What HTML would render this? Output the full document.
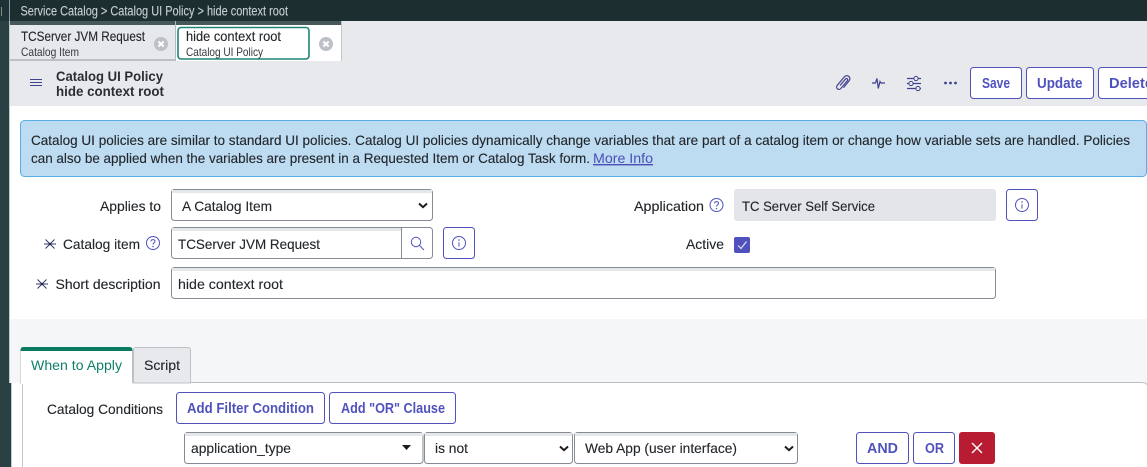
<!DOCTYPE html>
<html lang="en">
<head>
<meta charset="utf-8">
<title>hide context root</title>
<style>
html,body{margin:0;padding:0;width:1147px;height:467px;overflow:hidden;background:#fff}
svg{display:block}
text{font-family:"Liberation Sans",Arial,sans-serif;font-size:14px;fill:#22262a;stroke:#22262a;stroke-width:.12}
.b{font-weight:bold}
.p{fill:#4f52bd;stroke:none;font-weight:bold;font-size:14.5px}
.s{font-size:12px;fill:#33383d;stroke:none}
.btn{fill:#fff;stroke:#4f52bd;stroke-width:1}
.f{fill:#fff;stroke:#858b92;stroke-width:1}
.ic{fill:none;stroke:#3f4290;stroke-width:1.2}
.pi{fill:none;stroke:#4f52bd;stroke-width:1}
</style>
</head>
<body>
<svg xmlns="http://www.w3.org/2000/svg" width="1147" height="467" viewBox="0 0 1147 467">
<defs>
<g id="inf"><circle r="6.5" class="pi"/><path d="M0-.8V3.6" class="pi" stroke-width="1.2"/><circle cy="-3" r=".8" fill="#4f52bd"/></g>
<g id="hlp"><circle r="6.5" class="pi"/><path d="M-2-1.6C-2-4 2-4 2-1.6C2-.1 0-.3 0 1.5" class="pi"/><circle cy="3.6" r=".7" fill="#4f52bd"/></g>
<g id="cls"><circle r="7" fill="#bcc0c7"/><path d="M-2.7-2.5L2.7 2.5M2.7-2.5L-2.7 2.5" stroke="#fff" stroke-width="1.9" fill="none"/></g>
<g id="ast"><path d="M-6 0H6M-4.500 -4.500L4.500 4.500M4.500 -4.500L-4.500 4.500" stroke="#34386f" stroke-width="1" fill="none"/><circle r="1.200" fill="#23253f"/></g>
<path id="chv" d="M-4-1.5L0 2.2L4-1.5" fill="none" stroke="#1b1b1b" stroke-width="2"/>
</defs>

<!-- chrome -->
<rect width="1147" height="467" fill="#fff"/>
<rect x="0" y="0" width="1147" height="21" fill="#1d2e31"/>
<rect x="0" y="0" width="9" height="467" fill="#2a4144"/>
<rect x="0" y="0" width="9" height="21" fill="#1f3235"/>
<rect x="1" y="7" width="1" height="9" fill="#7f8f7c"/>
<rect x="9" y="0" width="1" height="21" fill="#8c9a9c"/>
<rect x="9" y="21" width="1" height="362" fill="#c3c8cc"/>
<text x="20.500" y="15.500" style="font-size:13.500px;fill:#c7d0d2;stroke:#c7d0d2" textLength="267.500" lengthAdjust="spacingAndGlyphs">Service Catalog &gt; Catalog UI Policy &gt; hide context root</text>

<!-- tabs -->
<rect x="342" y="21" width="805" height="40" fill="#e8e9ed"/>
<rect x="10" y="21" width="165" height="39" fill="#e7e8eb"/>
<rect x="10" y="21" width="332" height="4" fill="#47585b"/>
<rect x="10" y="59" width="165" height="2" fill="#bcc0c4"/>
<rect x="175" y="21" width="1" height="40" fill="#b5babf"/>
<text x="21" y="41" style="font-size:14px" textLength="124" lengthAdjust="spacingAndGlyphs">TCServer JVM Request</text>
<text x="21" y="56" class="s" textLength="58" lengthAdjust="spacingAndGlyphs">Catalog Item</text>
<use href="#cls" x="161" y="44"/>
<rect x="176" y="25" width="165" height="36" fill="#fff"/>
<rect x="341" y="21" width="1" height="40" fill="#c3c6cb"/>
<rect x="178" y="27.500" width="131" height="31.500" rx="3" fill="#fff" stroke="#1f8476" stroke-width="1.600"/>
<text x="186" y="41" style="font-size:14px" textLength="95" lengthAdjust="spacingAndGlyphs">hide context root</text>
<text x="186" y="56" class="s" textLength="77" lengthAdjust="spacingAndGlyphs">Catalog UI Policy</text>
<use href="#cls" x="326" y="44"/>

<!-- header -->
<rect x="10" y="61" width="1137" height="45" fill="#e8e9ed"/>
<path d="M30 79.500H42M30 82.500H42M30 85.500H42" stroke="#3f4290" stroke-width="1.100" fill="none"/>
<text x="56" y="81" class="b" style="font-size:13.500px;fill:#2a2e33;stroke:none" textLength="107" lengthAdjust="spacingAndGlyphs">Catalog UI Policy</text>
<text x="56" y="96" class="b" style="font-size:13.500px;fill:#2a2e33;stroke:none" textLength="108" lengthAdjust="spacingAndGlyphs">hide context root</text>
<path class="ic" d="M840 85.500L845.300 79.200C846.600 77.700 848.500 79.300 847.300 80.800L840.800 88.500C838.800 90.900 835.200 88.200 837.200 85.400L844.200 77C847 73.800 851.700 77.300 849.200 80.600L843.500 87.800" />
<path class="ic" d="M872 83H875.500L877 78.500L878.300 88.500L880 81.500L881 83H885" stroke-width="1.500"/>
<path class="ic" d="M907 78.500H921M907 83.500H921M907 88.500H921"/>
<circle cx="916" cy="78.500" r="2.100" fill="#e8e9ed" stroke="#3f4290"/><circle cx="911" cy="83.500" r="2.100" fill="#e8e9ed" stroke="#3f4290"/><circle cx="918" cy="88.500" r="2.100" fill="#e8e9ed" stroke="#3f4290"/>
<circle cx="945.500" cy="83" r="1.400" fill="#3f4290"/><circle cx="950.500" cy="83" r="1.400" fill="#3f4290"/><circle cx="955.500" cy="83" r="1.400" fill="#3f4290"/>
<rect x="970.500" y="67.500" width="51" height="31" rx="3" class="btn"/>
<rect x="1026.500" y="67.500" width="67" height="31" rx="3" class="btn"/>
<rect x="1098.500" y="67.500" width="70" height="31" rx="3" class="btn"/>
<text x="982" y="88" class="p" textLength="28" lengthAdjust="spacingAndGlyphs">Save</text>
<text x="1037" y="88" class="p" textLength="45.500" lengthAdjust="spacingAndGlyphs">Update</text>
<text x="1109" y="88" class="p" textLength="44" lengthAdjust="spacingAndGlyphs">Delete</text>

<!-- alert -->
<rect x="20.500" y="120.500" width="1126" height="56" rx="4" fill="#bddbf1" stroke="#5aaee6"/>
<text x="31" y="145" textLength="1099" lengthAdjust="spacingAndGlyphs">Catalog UI policies are similar to standard UI policies. Catalog UI policies dynamically change variables that are part of a catalog item or change how variable sets are handled. Policies</text>
<text x="31" y="163" textLength="559" lengthAdjust="spacingAndGlyphs">can also be applied when the variables are present in a Requested Item or Catalog Task form.</text>
<text x="593" y="163" style="fill:#4a4eb5;stroke:none;text-decoration:underline" textLength="60" lengthAdjust="spacingAndGlyphs">More Info</text>

<!-- form left -->
<text x="100" y="211" textLength="61" lengthAdjust="spacingAndGlyphs">Applies to</text>
<rect x="171.500" y="189.500" width="261" height="31" rx="3" class="f"/>
<rect x="172" y="190" width="260" height="3" fill="#e6e7ea"/>
<text x="182" y="211" textLength="90" lengthAdjust="spacingAndGlyphs">A Catalog Item</text>
<use href="#chv" x="423" y="205"/>

<use href="#ast" x="50" y="244"/>
<text x="63" y="249" textLength="77" lengthAdjust="spacingAndGlyphs">Catalog item</text>
<use href="#hlp" x="153" y="243"/>
<rect x="171.500" y="227.500" width="261" height="31" rx="3" class="f"/>
<rect x="172" y="228" width="229" height="3" fill="#e6e7ea"/>
<path d="M401.500 228V258" stroke="#858b92"/>
<text x="178" y="249" textLength="142" lengthAdjust="spacingAndGlyphs">TCServer JVM Request</text>
<circle cx="416" cy="242" r="4.700" class="pi"/><path d="M419.500 245.500L424 250" class="pi"/>
<rect x="443.500" y="227.500" width="31" height="31" rx="3" class="btn"/>
<use href="#inf" x="459" y="243"/>

<use href="#ast" x="42" y="284"/>
<text x="55.500" y="289" textLength="105" lengthAdjust="spacingAndGlyphs">Short description</text>
<rect x="171.500" y="267.500" width="824" height="31" rx="3" class="f"/>
<rect x="172" y="268" width="823" height="3" fill="#e6e7ea"/>
<text x="178" y="289" textLength="105" lengthAdjust="spacingAndGlyphs">hide context root</text>

<!-- form right -->
<text x="634" y="211" textLength="70" lengthAdjust="spacingAndGlyphs">Application</text>
<use href="#hlp" x="716.500" y="205"/>
<rect x="734" y="189" width="262" height="32" rx="3" fill="#e4e5e9"/>
<text x="742" y="211" textLength="133" lengthAdjust="spacingAndGlyphs">TC Server Self Service</text>
<rect x="1006.500" y="189.500" width="31" height="31" rx="3" class="btn"/>
<use href="#inf" x="1022" y="205"/>
<text x="686" y="249" textLength="38" lengthAdjust="spacingAndGlyphs">Active</text>
<rect x="734" y="237" width="16" height="16" rx="2" fill="#4f52bd"/>
<path d="M738 245.500L741 248.500L746.500 241.500" fill="none" stroke="#dfe0f5" stroke-width="1.200"/>

<!-- lower area -->
<rect x="10" y="319" width="1137" height="64" fill="#f5f6f8"/>
<rect x="0" y="383" width="11" height="84" fill="#2a4144"/>
<rect x="11" y="383" width="1" height="84" fill="#c3c8cc"/>
<rect x="12" y="383" width="1135" height="84" fill="#fff"/>
<path d="M22.500 383V467" stroke="#c2c6cc" fill="none"/>
<path d="M132 382.500H1141Q1147 382.500 1147 385" stroke="#b9bec8" fill="none"/>
<path d="M133.500 383V350Q133.500 347.500 136 347.500H188Q190.500 347.500 190.500 350V383Z" fill="#e8e9ed" stroke="#bcc1c7"/>
<path d="M20.500 384V350Q20.500 347 23.500 347H129.500Q132.500 347 132.500 350V384Z" fill="#fff"/>
<path d="M20.500 351V350Q20.500 347 23.500 347H129.500Q132.500 347 132.500 350V351Z" fill="#0b7a60"/>
<path d="M20.500 351V384" stroke="#d5d8dc" fill="none"/>
<path d="M132.500 351V383" stroke="#bcc1c7" fill="none"/>
<text x="31" y="370" style="fill:#0f7f68;stroke:none" textLength="91" lengthAdjust="spacingAndGlyphs">When to Apply</text>
<text x="144" y="370" textLength="36" lengthAdjust="spacingAndGlyphs">Script</text>

<text x="47" y="414" textLength="116" lengthAdjust="spacingAndGlyphs">Catalog Conditions</text>
<rect x="176.500" y="392.500" width="148" height="31" rx="3" class="btn"/>
<rect x="329.500" y="392.500" width="126" height="31" rx="3" class="btn"/>
<text x="187" y="413" class="p" textLength="127" lengthAdjust="spacingAndGlyphs">Add Filter Condition</text>
<text x="341" y="413" class="p" textLength="104" lengthAdjust="spacingAndGlyphs">Add "OR" Clause</text>

<rect x="184.500" y="432.500" width="238.500" height="31" rx="3" class="f"/>
<rect x="185" y="433" width="238" height="3" fill="#e6e7ea"/>
<text x="191" y="453" textLength="100" lengthAdjust="spacingAndGlyphs">application_type</text>
<path d="M402 445H411L406.500 450Z" fill="#1b1b1b"/>
<rect x="424.500" y="432.500" width="148" height="31" rx="3" class="f"/>
<rect x="425" y="433" width="147" height="3" fill="#e6e7ea"/>
<text x="435" y="453" textLength="33" lengthAdjust="spacingAndGlyphs">is not</text>
<use href="#chv" x="564" y="448"/>
<rect x="574.500" y="432.500" width="223" height="31" rx="3" class="f"/>
<rect x="575" y="433" width="222" height="3" fill="#e6e7ea"/>
<text x="585" y="453" textLength="152" lengthAdjust="spacingAndGlyphs">Web App (user interface)</text>
<use href="#chv" x="789" y="448"/>

<rect x="856.500" y="432.500" width="52" height="31" rx="3" class="btn"/>
<rect x="913.500" y="432.500" width="41" height="31" rx="3" class="btn"/>
<rect x="959" y="432" width="36" height="32" rx="3" fill="#b71c33"/>
<text x="867" y="453" class="p" textLength="31" lengthAdjust="spacingAndGlyphs">AND</text>
<text x="925" y="453" class="p" textLength="19" lengthAdjust="spacingAndGlyphs">OR</text>
<path d="M972 443L982 453M982 443L972 453" stroke="#fff" stroke-width="1.400" fill="none"/>
</svg>
</body>
</html>
